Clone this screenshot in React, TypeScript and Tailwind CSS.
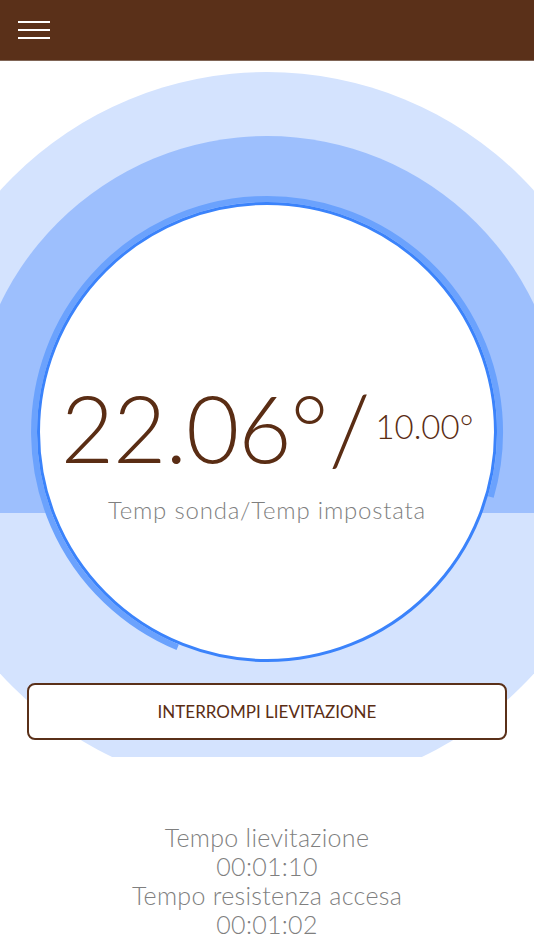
export default function App() {
  return (
    <div className="w-[534px] min-h-[950px] bg-white font-['Lato','Noto_Sans',sans-serif] overflow-hidden">
      <header className="h-[61px] bg-[#5a3019] border-b border-[#806556] flex items-center px-[18px]">
        <button className="flex flex-col gap-[6px]" aria-label="menu">
          <span className="block w-[32px] h-[2px] bg-white" />
          <span className="block w-[32px] h-[2px] bg-white" />
          <span className="block w-[32px] h-[2px] bg-white" />
        </button>
      </header>

      <main className="relative overflow-hidden pt-[141px] pb-[17px]">
        {/* decorative rings behind the gauge */}
        <div className="absolute left-[-93px] top-[11px] w-[720px] h-[720px] rounded-full bg-[#d4e3fe]" />
        <div className="absolute inset-x-0 top-0 h-[452px] overflow-hidden">
          <div className="absolute left-[-29px] top-[75px] w-[592px] h-[592px] rounded-full bg-[#9dbffd]" />
        </div>

        <div className="relative mx-auto w-[460px] h-[460px] rounded-full bg-white border-[3px] border-[#3b83fb] flex flex-col items-center pt-[175px]">
          <svg className="absolute left-[-13px] top-[-13px] w-[480px] h-[480px] pointer-events-none" viewBox="0 0 480 480">
            <path d="M150.7 455.2 A233 233 0 1 1 463.8 305" fill="none" stroke="#6ba2fd" strokeWidth="6" />
          </svg>
          <div className="flex items-center text-[#5a2d14] font-light leading-none">
            <span className="text-[92px] tracking-[-1px]">22.06°</span>
            <span className="text-[96px] ml-[1px]">/</span>
            <span className="text-[33px] ml-[5px] mb-[4px]">10.00°</span>
          </div>
          <p className="mt-[16px] text-[24px] font-light tracking-[0.8px] text-[#7f7f7f]">Temp sonda/Temp impostata</p>
        </div>

        <button className="relative mt-[21px] mx-[27px] w-[480px] h-[57px] rounded-[8px] border-2 border-[#5a3019] bg-white text-[#5a2d14] text-[17px]">
          INTERROMPI LIEVITAZIONE
        </button>
      </main>

      <section className="pt-[66px] text-center text-[#7f7f7f] font-light text-[25px] tracking-[0.3px] leading-[29px]">
        <p>Tempo lievitazione</p>
        <p>00:01:10</p>
        <p>Tempo resistenza accesa</p>
        <p>00:01:02</p>
      </section>
    </div>
  )
}
